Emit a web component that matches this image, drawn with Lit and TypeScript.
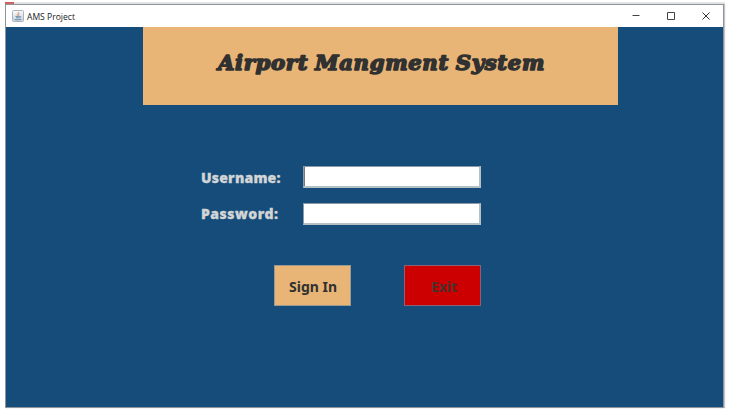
import { LitElement, html, css, svg } from "lit";
import { customElement, property } from "lit/decorators.js";

/** A single line of text set to an exact advance width. */
@customElement("fit-text")
class FitText extends LitElement {
  @property() text = "";
  @property({ type: Number }) width = 100;
  @property({ type: Number }) height = 20;
  @property({ type: Number }) baseline = 15;
  @property() adjust = "spacingAndGlyphs";
  static styles = css`
    :host { display: block; }
    svg { display: block; overflow: visible; }
    text { fill: currentColor; stroke: currentColor; stroke-width: var(--weight, 0); stroke-linejoin: round; }
  `;
  render() {
    return html`<svg width=${this.width} height=${this.height}>
      ${svg`<text x="0" y=${this.baseline} textLength=${this.width} lengthAdjust=${this.adjust}>${this.text}</text>`}
    </svg>`;
  }
}

@customElement("title-bar")
class TitleBar extends LitElement {
  static styles = css`
    :host {
      display: flex; align-items: center; height: 22px; box-sizing: border-box;
      padding: 0 13px 0 6px; background: #fff; color: #222;
      font: 9.5px "Open Sans", "Noto Sans", sans-serif;
    }
    .logo { display: block; margin-right: 2.5px; }
    .controls { display: flex; gap: 27px; margin-left: auto; }
    .controls svg { display: block; }
  `;
  render() {
    return html`
      <svg class="logo" width="12" height="12" viewBox="0 0 12 12">
        <defs><linearGradient id="g" x2="0" y2="1"><stop stop-color="#fafbfc" /><stop offset="1" stop-color="#c5d1dc" /></linearGradient></defs>
        <rect x=".5" y=".5" width="11" height="11" rx="1" fill="url(#g)" stroke="#a9b4be" />
        <path d="M6.3 1.8C7.6 3.3 4.6 3.8 5.8 5.5M7.5 3.5Q5.7 4.4 6.7 5.7" fill="none" stroke="#de8c5b" stroke-width=".9" />
        <path d="M3.5 6.4h4.3M4 7.8h3.6M8 6.3q1.7.2-.2 1.5M2.6 9.4q3.1 1 6.7-.1" fill="none" stroke="#587b9b" stroke-width=".8" />
      </svg>
      <fit-text text="AMS Project" .width=${48} .height=${14} .baseline=${10.5}></fit-text>
      <div class="controls">
        <svg width="8" height="8"><path d="M.5 3.5h7" stroke="#444" /></svg>
        <svg width="8" height="8"><path d="M.5 .5h7v7h-7z" fill="none" stroke="#444" /></svg>
        <svg width="8" height="8"><path d="M.5 .5l7 7m0-7l-7 7" stroke="#333" /></svg>
      </div>`;
  }
}

@customElement("app-root")
class AppRoot extends LitElement {
  static styles = css`
    :host {
      display: block; width: 730px; height: 411px; box-sizing: border-box; position: relative;
      padding: 4px 0 0 5px; background: #fff; overflow: hidden;
    }
    .behind { position: absolute; left: 5px; top: 2px; width: 720px; height: 2px; background: #e6e6e6; }
    .behind::before { content: ""; display: block; width: 9px; height: 2px; background: #cf5a58; }
    .window {
      position: relative; width: 719px; height: 404px; box-sizing: border-box;
      border: 1px solid #8c959c; box-shadow: 1px 0 1px #c4c4c4;
    }
    .content { height: 380px; background: #164c7a; display: flex; flex-direction: column; }
    .banner {
      width: 475px; height: 78px; margin-left: 137px; background: #e9b576; color: #303130;
      box-sizing: border-box; padding: 24px 0 0 75px; flex: none;
      font: italic bold 20px "DejaVu Serif", serif; --weight: 1.5px;
      letter-spacing: .6px; word-spacing: -1px;
    }
    .form { display: grid; grid-template-columns: 102px 178px; row-gap: 15px; margin: 61px 0 0 195px; }
    .label { color: #d2d5d5; font: 900 14px "Noto Sans", "Open Sans", sans-serif; --weight: .3px; }
    .field {
      display: block; box-sizing: border-box; width: 178px; height: 22px; margin: 0; padding: 0 2px;
      border: 1px solid #8a9ba5; border-right: 2px solid #b3c1c5; border-bottom: 2px solid #b3c1c5;
      border-radius: 0; background: #fff; outline: none; font: 12px "Noto Sans", sans-serif;
    }
    .focused { box-shadow: inset 1px 0 #777; }
    .actions { display: flex; gap: 53px; margin: 40px 0 0 268px; }
    .button {
      display: block; width: 77px; height: 41px; box-sizing: border-box; margin: 0;
      padding: 2px 0 0 14px; border: 1px solid #9a9992; border-radius: 0;
      background: #e9b576; color: #303130; font: bold 15px "Noto Sans", "Open Sans", sans-serif;
    }
    .exit { background: #cc0000; border-color: #8b6078; color: #48302c; padding-left: 25.5px; }
  `;
  render() {
    return html`
      <div class="behind"></div>
      <div class="window">
        <title-bar></title-bar>
        <main class="content">
          <header class="banner">
            <fit-text text="Airport Mangment System" .width=${327} .height=${26} .baseline=${19.4}></fit-text>
          </header>
          <div class="form">
            <fit-text class="label" text="Username:" adjust="spacing" .width=${79.5} .height=${22} .baseline=${16.5}></fit-text>
            <input class="field focused" aria-label="Username" />
            <fit-text class="label" text="Password:" adjust="spacing" .width=${77} .height=${22} .baseline=${16}></fit-text>
            <input class="field" type="password" aria-label="Password" />
          </div>
          <div class="actions">
            <button class="button"><fit-text text="Sign In" .width=${48} .height=${20} .baseline=${15}></fit-text></button>
            <button class="button exit"><fit-text text="Exit" .width=${26} .height=${20} .baseline=${15}></fit-text></button>
          </div>
        </main>
      </div>`;
  }
}
